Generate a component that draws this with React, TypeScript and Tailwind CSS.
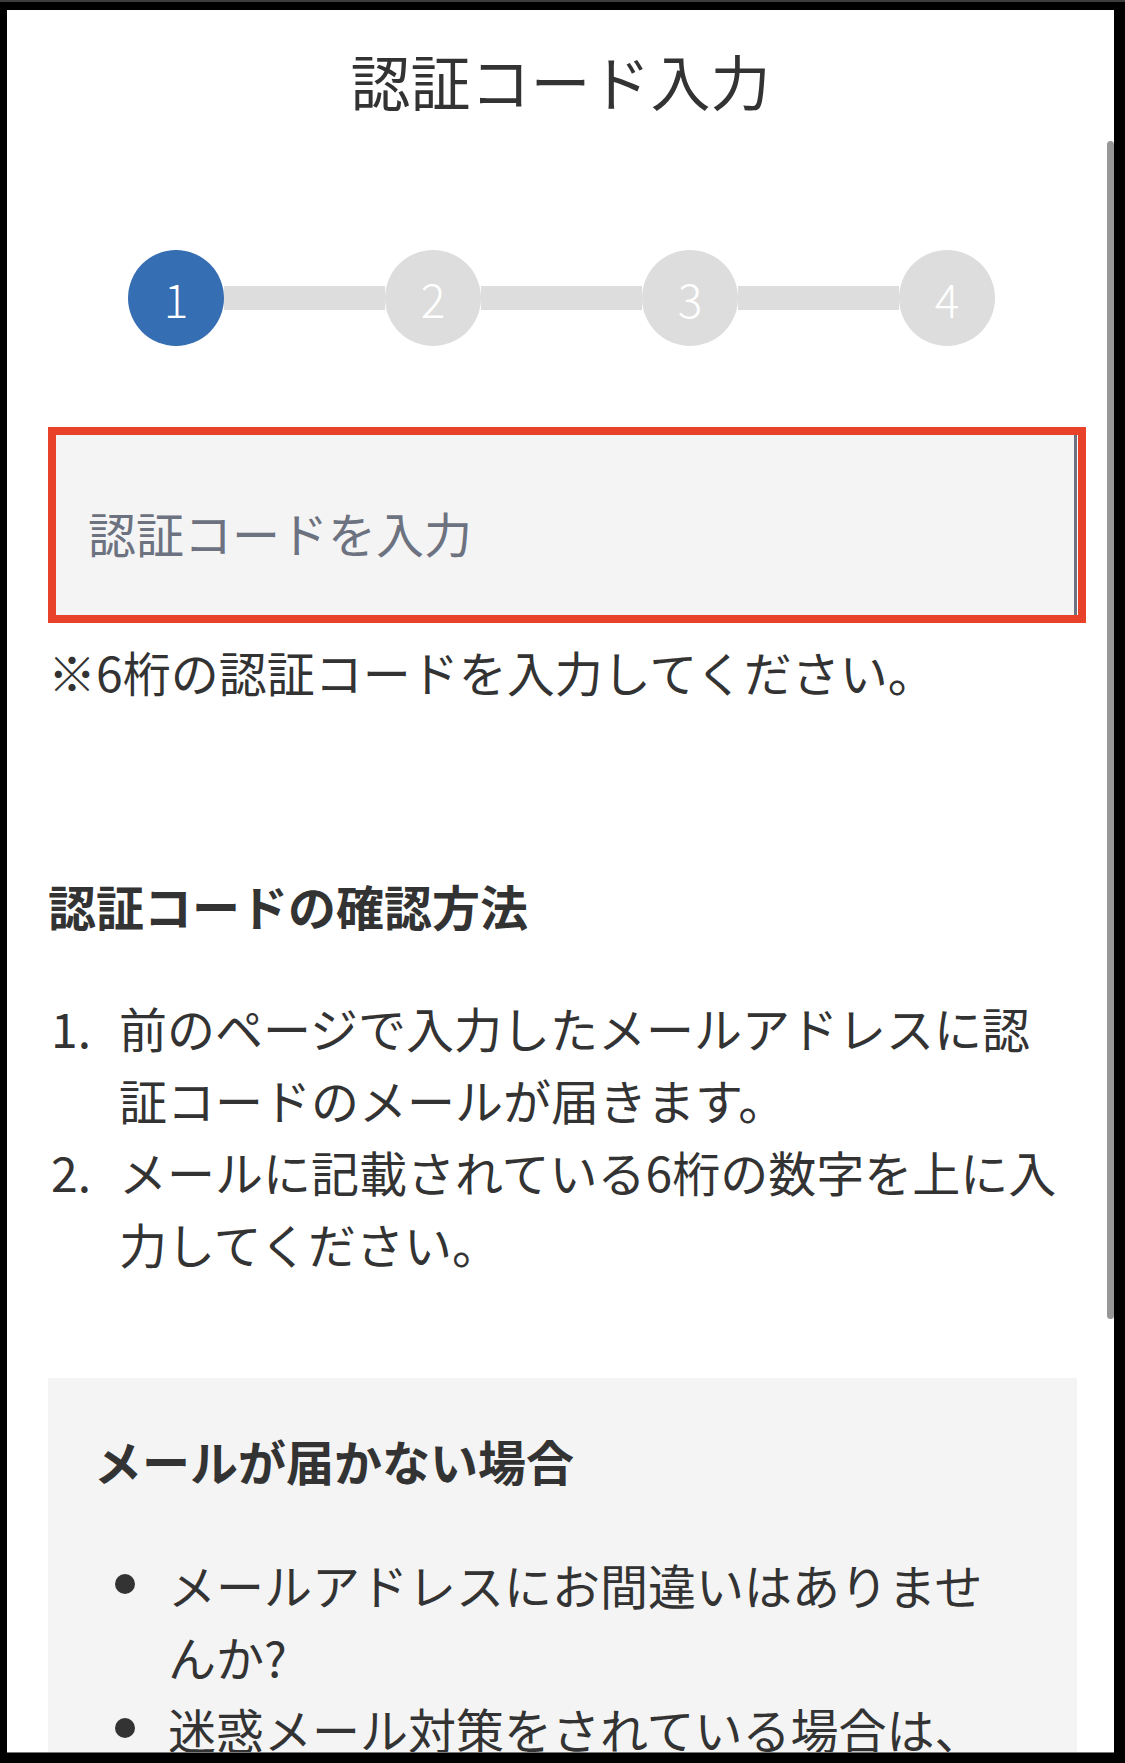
const steps = [1, 2, 3, 4];

const howTo = [
  "前のページで入力したメールアドレスに認証コードのメールが届きます。",
  "メールに記載されている6桁の数字を上に入力してください。",
];

const notReceived = [
  "メールアドレスにお間違いはありませんか?",
  "迷惑メール対策をされている場合は、",
];

const Stepper = ({ current }: { current: number }) => {
  return (
    <div className="ml-[121px] mt-[125px] flex w-[867px] items-center">
      {steps.map((n, i) => (
        <div key={n} className={i === 0 ? "flex items-center" : "flex flex-1 items-center"}>
          {i > 0 && <div className="h-[24px] flex-1 bg-[#dddddd]" />}
          <div
            className={
              n === current
                ? "flex h-[96px] w-[96px] items-center justify-center rounded-full bg-[#356eb2] text-[46px] font-light leading-none text-white"
                : "flex h-[96px] w-[96px] items-center justify-center rounded-full bg-[#dddddd] text-[46px] font-light leading-none text-white"
            }
          >
            {n}
          </div>
        </div>
      ))}
    </div>
  );
};

export default function App() {
  return (
    <div
      className="h-[1763px] w-[1125px] overflow-hidden border-t-2 border-[#3d3d3d] bg-black pb-[10px] pl-[7px] pr-[11px] pt-[8px]"
      style={{ fontFamily: '"Noto Sans CJK JP", "Noto Sans", sans-serif' }}
    >
      <div className="relative h-[1743px] w-[1107px] overflow-hidden border-b border-[#777] bg-white text-[#333333]">
        {/* scrollbar */}
        <div className="absolute left-[1100px] top-[131px] h-[1178px] w-[7px] rounded-full bg-[#979797]" />

        <h1 className="pt-[25px] text-center text-[60px] font-normal leading-[90px]">認証コード入力</h1>

        <Stepper current={1} />

        <div className="ml-[41px] mt-[81px] w-[1038px] border-8 border-[#e8432a] bg-white pr-px">
          <input
            type="text"
            placeholder="認証コードを入力"
            className="block h-[180px] w-full border-r-[3px] border-[#6c7280] bg-[#f4f4f4] pl-[32px] pt-[14px] text-[48px] outline-none placeholder:text-[#6c7280]"
          />
        </div>

        <p className="ml-[41px] mt-[12px] text-[48px] leading-[72px]">※6桁の認証コードを入力してください。</p>

        <h2 className="ml-[41px] mt-[162px] text-[48px] font-bold leading-[72px]">認証コードの確認方法</h2>

        <ol className="ml-[38px] mt-[50px] w-[1024px]">
          {howTo.map((t, i) => (
            <li key={i} className="flex text-[48px] leading-[72px]">
              <span className="w-[74px] shrink-0 pl-[6px]">{i + 1}.</span>
              <span>{t}</span>
            </li>
          ))}
        </ol>

        <div className="ml-[41px] mt-[99px] w-[1029px] bg-[#f4f4f4] pb-[40px] pl-[46px] pr-[50px] pt-[46px]">
          <h3 className="text-[48px] font-bold leading-[72px]">メールが届かない場合</h3>
          <ul className="mt-[52px]">
            {notReceived.map((t, i) => (
              <li key={i} className="flex text-[48px] leading-[72px]">
                <span className="flex h-[72px] w-[74px] shrink-0 items-center pl-[21px]">
                  <span className="h-[20px] w-[20px] rounded-full bg-[#333333]" />
                </span>
                <span>{t}</span>
              </li>
            ))}
          </ul>
        </div>
      </div>
    </div>
  );
}
